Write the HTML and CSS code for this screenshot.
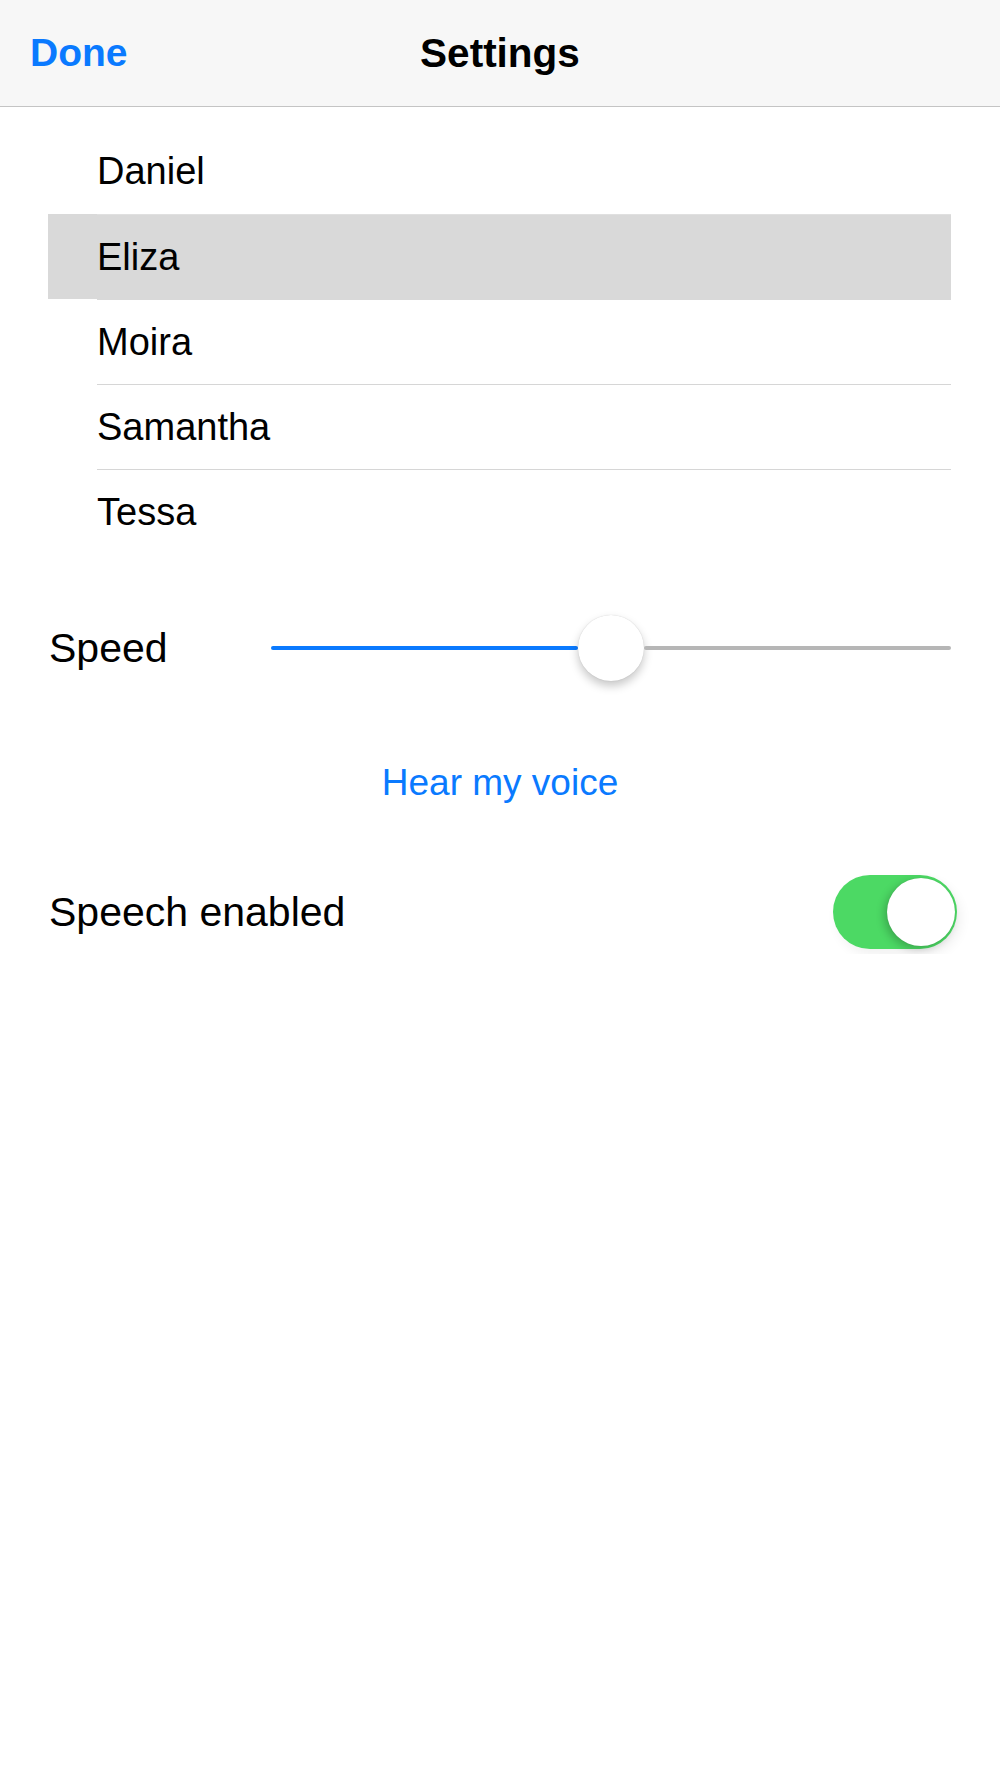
FILE: index.html
```html
<!DOCTYPE html>
<html lang="en">
<head>
    <meta charset="UTF-8">
    <meta name="viewport" content="width=device-width, initial-scale=1.0">
    <title>Settings</title>
    <link rel="stylesheet" href="styles.css">
</head>
<body>
    <div class="navbar">
        <a class="nav-done">Done</a>
        <h1 class="nav-title">Settings</h1>
        <span class="nav-spacer"></span>
    </div>

    <ul class="voices">
        <li class="voice"><span class="voice-name">Daniel</span></li>
        <li class="voice selected"><span class="voice-name">Eliza</span></li>
        <li class="voice"><span class="voice-name">Moira</span></li>
        <li class="voice"><span class="voice-name">Samantha</span></li>
        <li class="voice"><span class="voice-name">Tessa</span></li>
    </ul>

    <div class="speed-row">
        <span class="row-label speed-label">Speed</span>
        <div class="slider">
            <div class="track track-min"></div>
            <div class="thumb"></div>
            <div class="track track-max"></div>
        </div>
    </div>

    <div class="hear-row">
        <a class="hear-btn">Hear my voice</a>
    </div>

    <div class="switch-row">
        <span class="row-label">Speech enabled</span>
        <div class="switch on">
            <div class="knob"></div>
        </div>
    </div>
</body>
</html>
```

FILE: styles.css
```css
/* Settings screen */
body {
    font-family: "Liberation Sans", Arial, sans-serif;
    margin: 0;
    background-color: #fff;
    color: #000;
}

.navbar {
    display: flex;
    align-items: center;
    justify-content: space-between;
    height: 106px;
    padding: 0 30px;
    background-color: #f7f7f7;
    border-bottom: 1px solid #c4c4c4;
}
.nav-done {
    color: #0a7aff;
    font-size: 39px;
    font-weight: bold;
    width: 150px;
}
.nav-title {
    margin: 0;
    font-size: 40.5px;
    font-weight: bold;
}
.nav-spacer { width: 150px; }

.voices {
    list-style-type: none;
    margin: 22px 49px 0 48px;
    padding: 0;
}
.voice {
    height: 85px;
    padding-left: 49px;
}
.voice-name {
    display: flex;
    align-items: center;
    height: 100%;
    box-sizing: border-box;
    border-top: 1px solid #d6d6d6;
    font-size: 38px;
}
.voice:first-child .voice-name { border-top: none; }
.voice.selected { background-color: #d9d9d9; }
.voice.selected .voice-name { border-top-color: #e0e0e0; }
.voice.selected + .voice .voice-name { border-top-color: #d9d9d9; }

.row-label { font-size: 41px; }

.speed-row {
    display: flex;
    align-items: center;
    height: 94px;
    margin-top: 47px;
    padding: 0 49px;
}
.speed-label { width: 222px; }
.slider {
    flex: 1;
    display: flex;
    align-items: center;
    height: 66px;
}
.track {
    flex: 1;
    height: 4px;
    border-radius: 2px;
}
.track-min { background-color: #0a7aff; }
.track-max { background-color: #b6b6b6; }
.thumb {
    width: 66px;
    height: 66px;
    border-radius: 50%;
    background-color: #fff;
    box-shadow: 0 5px 10px rgba(0, 0, 0, 0.22), 0 0 1px rgba(0, 0, 0, 0.2);
}

.hear-row {
    display: flex;
    justify-content: center;
    align-items: center;
    height: 84px;
    margin-top: 46px;
}
.hear-btn {
    color: #0a7aff;
    font-size: 37px;
}

.switch-row {
    display: flex;
    align-items: center;
    justify-content: space-between;
    height: 84px;
    margin-top: 45px;
    padding: 0 43px 0 49px;
}
.switch {
    display: flex;
    align-items: center;
    justify-content: flex-end;
    width: 124px;
    height: 74px;
    box-sizing: border-box;
    padding: 2px;
    border-radius: 37px;
    background-color: #4cd964;
    box-shadow: 4px 6px 12px rgba(0, 0, 0, 0.06);
}
.knob {
    width: 68px;
    height: 68px;
    border-radius: 50%;
    background-color: #fff;
    box-shadow: -3px 3px 8px rgba(0, 0, 0, 0.22), 0 0 1px rgba(0, 0, 0, 0.15);
}
```
